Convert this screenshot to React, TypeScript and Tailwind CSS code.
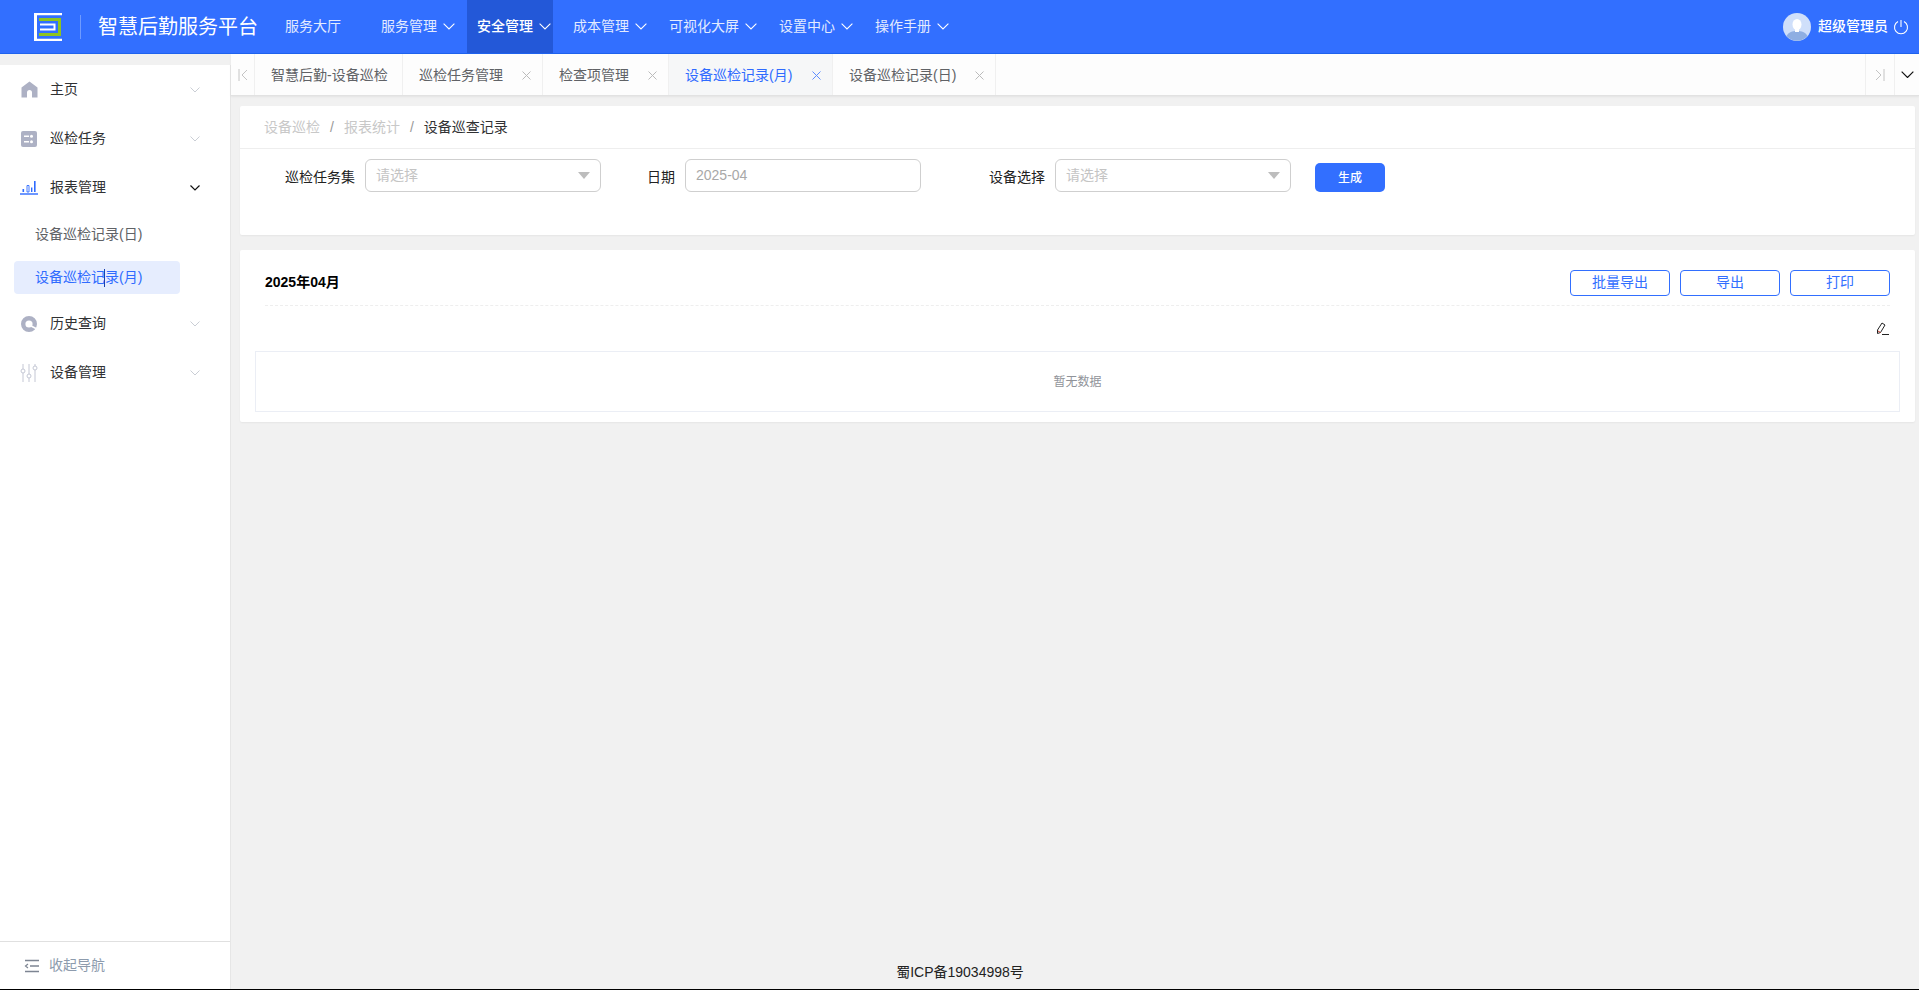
const navItems = [
  { label: '服务管理', active: false },
  { label: '安全管理', active: true },
  { label: '成本管理', active: false },
  { label: '可视化大屏', active: false },
  { label: '设置中心', active: false },
  { label: '操作手册', active: false },
];

const tabs = [
  { label: '智慧后勤-设备巡检', width: 'w-[148px]', closable: false, active: false },
  { label: '巡检任务管理', width: 'w-[140px]', closable: true, active: false },
  { label: '检查项管理', width: 'w-[126px]', closable: true, active: false },
  { label: '设备巡检记录(月)', width: 'w-[164px]', closable: true, active: true },
  { label: '设备巡检记录(日)', width: 'w-[163px]', closable: true, active: false },
];

function Chevron({ width, color, weight }: { width: number; color: string; weight: number }) {
  return (
    <svg width={width} height={width * 0.6} viewBox="0 0 10 6" fill="none" stroke={color} strokeWidth={weight}>
      <path d="M0.5 0.5 5 5 9.500 0.500" />
    </svg>
  );
}

function CloseMark({ color }: { color: string }) {
  return (
    <svg width="9" height="9" viewBox="0 0 9 9" fill="none" stroke={color} strokeWidth="1">
      <path d="M0.500 0.500 8.500 8.500M8.500 0.500 0.500 8.500" />
    </svg>
  );
}

function Logo() {
  return (
    <svg width="28" height="28" viewBox="0 0 28 28" fill="none">
      <path d="M28 1H1.5V27H28" stroke="#fff" strokeWidth="2.4" />
      <path d="M1.5 0V28" stroke="#fff" strokeWidth="3" />
      <path d="M5 6.5H25.5V21.5H5" stroke="#8fc31f" strokeWidth="3" />
      <path d="M6 11.5H20.5V16.5H6" stroke="#fff" strokeWidth="2" />
    </svg>
  );
}

function HomeIcon() {
  return (
    <svg width="17" height="17" viewBox="0 0 17 17">
      <path d="M8.5 0.5 16.5 6.5V16.5H11V11.5a2.5 2.5 0 0 0-5 0V16.5H0.5V6.5Z" fill="#adb1c4" />
    </svg>
  );
}

function TaskIcon() {
  return (
    <svg width="16" height="16" viewBox="0 0 16 16">
      <rect width="16" height="16" rx="2" fill="#adb1c4" />
      <path d="M3 5.2H8M3 10.8H8" stroke="#fff" strokeWidth="1.4" />
      <circle cx="10.5" cy="5.2" r="1.5" fill="#fff" />
      <circle cx="10.5" cy="10.8" r="1.5" fill="#fff" />
    </svg>
  );
}

function ChartIcon() {
  return (
    <svg width="18" height="15" viewBox="0 0 18 15" fill="none">
      <path d="M0 14H18" stroke="#2f6bff" strokeWidth="1.4" />
      <rect x="2.5" y="9" width="1.6" height="3" fill="#2f6bff" />
      <path d="M7 5.5H9V12H7Z" stroke="#2f6bff" strokeWidth="0.9" />
      <rect x="11" y="7.5" width="1.4" height="4.5" fill="#2f6bff" />
      <rect x="14" y="1" width="1.6" height="11" fill="#2f6bff" />
    </svg>
  );
}

function HistoryIcon() {
  return (
    <svg width="16" height="16" viewBox="0 0 16 16" fill="none">
      <circle cx="8" cy="8" r="5.800" stroke="#adb1c4" strokeWidth="4.400" />
      <path d="M10 10 15 12.5" stroke="#fff" strokeWidth="1.6" />
    </svg>
  );
}

function DeviceIcon() {
  return (
    <svg width="18" height="18" viewBox="0 0 18 18" fill="none" stroke="#c4c7d4" strokeWidth="1">
      <path d="M3 0V5M3 9V18M9 0V10M9 14V18M15 0V2M15 6V18" />
      <circle cx="3" cy="7" r="2" />
      <circle cx="9" cy="12" r="2" />
      <circle cx="15" cy="4" r="2" />
    </svg>
  );
}

function CollapseIcon() {
  return (
    <svg width="16" height="14" viewBox="0 0 16 14" fill="none" stroke="#7d8592" strokeWidth="1.5">
      <path d="M1 1.5H15M6 7H15M1 12.5H15" />
      <path d="M4 5 1.5 7 4 9" strokeWidth="1.2" />
    </svg>
  );
}

function Avatar() {
  return (
    <svg width="28" height="28" viewBox="0 0 28 28">
      <circle cx="14" cy="14" r="14" fill="#cfdffa" />
      <path d="M3.5 23c2-4 6-5 10.500-5s8.500 1 10.500 5a14 14 0 0 1-21 0Z" fill="#8eaee2" />
      <ellipse cx="14" cy="11.500" rx="4.500" ry="5.500" fill="#fff" />
      <path d="M12 15h4v4h-4Z" fill="#fff" />
    </svg>
  );
}

function SideItem({ icon, label, open }: { icon: React.ReactNode; label: string; open?: boolean }) {
  return (
    <div className="flex h-[49px] items-center pl-[20px] pr-[30px] text-[14px] text-[#303133]">
      <div className="flex w-[18px] justify-center">{icon}</div>
      <span className="ml-[12px] flex-1">{label}</span>
      {open ? <Chevron width={10} color="#111" weight={1.2} /> : <Chevron width={10} color="#c4c8d0" weight={0.9} />}
    </div>
  );
}

function SelectBox() {
  return (
    <div className="flex h-[33px] w-[236px] items-center justify-between rounded-[6px] border border-[#cfcfcf] bg-white px-[10px] text-[14px] text-[#c4c4c4]">
      <span>请选择</span>
      <span className="h-0 w-0 border-x-[6px] border-t-[7px] border-x-transparent border-t-[#bdbdbd]" />
    </div>
  );
}

export default function App() {
  return (
    <div className="flex h-[990px] w-[1919px] flex-col overflow-hidden border-b border-black bg-[#f1f1f1] font-['Liberation_Sans','Noto_Sans_CJK_SC',sans-serif]">
      {/* Header */}
      <header className="flex h-[54px] shrink-0 items-center border-b border-[#1f63ee] bg-[#326fff] text-white">
        <div className="ml-[34px]">
          <Logo />
        </div>
        <div className="ml-[18px] h-[24px] w-px bg-[#6f9bff]" />
        <div className="ml-[17px] w-[160px] whitespace-nowrap text-[20px]">智慧后勤服务平台</div>
        <div className="ml-[27px] w-[86px] whitespace-nowrap text-[14px] text-[#e3ebff]">服务大厅</div>
        <nav className="flex h-[53px] gap-[10px]">
          {navItems.map((item) => (
            <div
              key={item.label}
              className={`flex items-center whitespace-nowrap pl-[10px] pr-[2px] text-[14px] ${
                item.active ? 'bg-[#2358d8] font-medium text-white' : 'text-[#e3ebff]'
              }`}
            >
              {item.label}
              <span className="ml-[6px]">
                <Chevron width={12} color="#fff" weight={0.9} />
              </span>
            </div>
          ))}
        </nav>
        <div className="ml-auto flex items-center pr-[10px]">
          <Avatar />
          <span className="ml-[7px] whitespace-nowrap text-[14px] font-medium">超级管理员</span>
          <svg width="16" height="16" viewBox="0 0 16 16" fill="none" stroke="#fff" strokeWidth="1.1" className="ml-[5px]">
            <path d="M5 2.500a6.500 6.500 0 1 0 6 0" />
            <path d="M8 1V8" />
          </svg>
        </div>
      </header>

      <div className="flex min-h-0 flex-1">
        {/* Sidebar */}
        <aside className="mt-[11px] flex w-[231px] shrink-0 flex-col border-r border-[#e6e6e6] bg-white">
          <div className="relative flex-1">
            <SideItem icon={<HomeIcon />} label="主页" />
            <SideItem icon={<TaskIcon />} label="巡检任务" />
            <SideItem icon={<ChartIcon />} label="报表管理" open />
            <div className="mb-[5px] flex h-[44px] items-center pl-[35px] text-[14px] text-[#606266]">设备巡检记录(日)</div>
            <div className="mx-[14px] flex h-[33px] w-[166px] items-center rounded-[4px] bg-[#e6edfe] pl-[21px] text-[14px] text-[#2f6bff]">
              设备巡检记录(月)
            </div>
            <div className="h-[5px]" />
            <SideItem icon={<HistoryIcon />} label="历史查询" />
            <SideItem icon={<DeviceIcon />} label="设备管理" />
            {/* mouse cursor caught in the screenshot */}
            <div className="absolute left-[104px] top-[204px] h-[18px] w-px bg-[#1a3fb0]" />
          </div>
          <div className="flex h-[48px] shrink-0 items-center border-t border-[#e0e0e0] pl-[24px] text-[14px] text-[#8d9bad]">
            <CollapseIcon />
            <span className="ml-[9px]">收起导航</span>
          </div>
        </aside>

        {/* Main */}
        <main className="flex min-w-0 flex-1 flex-col">
          <div className="flex h-[42px] shrink-0 items-stretch border-b border-[#e2e2e2] bg-[#fdfdfd] shadow-[0_1px_2px_rgba(0,0,0,0.06)]">
            <div className="flex w-[24px] items-center justify-center border-r border-[#f0f0f0]">
              <svg width="10" height="12" viewBox="0 0 10 12" fill="none" stroke="#c4c4c4" strokeWidth="1">
                <path d="M1 0V12M9 1 4 6 9 11" />
              </svg>
            </div>
            {tabs.map((tab) => (
              <div
                key={tab.label}
                className={`flex ${tab.width} items-center justify-between border-r border-[#f0f0f0] pl-[16px] pr-[11px] pt-[2px] text-[14px] ${
                  tab.active ? 'bg-[#f6f7f8] text-[#2f6bff]' : 'text-[#606266]'
                }`}
              >
                <span className="whitespace-nowrap">{tab.label}</span>
                {tab.closable && <CloseMark color={tab.active ? '#5f8dff' : '#bbbbbb'} />}
              </div>
            ))}
            <div className="ml-auto flex w-[30px] items-center justify-center border-x border-[#f0f0f0]">
              <svg width="10" height="12" viewBox="0 0 10 12" fill="none" stroke="#c4c4c4" strokeWidth="1">
                <path d="M9 0V12M1 1 6 6 1 11" />
              </svg>
            </div>
            <div className="flex w-[24px] items-center justify-center">
              <Chevron width={13} color="#111" weight={0.9} />
            </div>
          </div>

          <div className="flex flex-1 flex-col pl-[9px] pr-[4px] pt-[10px]">
            {/* Filter card */}
            <section className="h-[129px] rounded-[2px] bg-white shadow-[0_1px_2px_rgba(0,0,0,0.05)]">
              <div className="flex h-[43px] items-center border-b border-[#eeeeee] pl-[24px] text-[14px] text-[#c8c8c8]">
                <span>设备巡检</span>
                <span className="mx-[10px] text-[#999]">/</span>
                <span>报表统计</span>
                <span className="mx-[10px] text-[#999]">/</span>
                <span className="text-[#303133]">设备巡查记录</span>
              </div>
              <div className="mt-[10px] flex items-start text-[14px] text-[#222]">
                <span className="ml-[45px] mt-[8px] w-[70px] whitespace-nowrap">巡检任务集</span>
                <div className="ml-[10px]">
                  <SelectBox />
                </div>
                <span className="ml-[46px] mt-[8px] whitespace-nowrap">日期</span>
                <div className="ml-[10px] flex h-[33px] w-[236px] items-center rounded-[6px] border border-[#cfcfcf] pl-[10px] text-[#a8a8a8]">
                  2025-04
                </div>
                <span className="ml-[68px] mt-[8px] whitespace-nowrap">设备选择</span>
                <div className="ml-[10px]">
                  <SelectBox />
                </div>
                <button className="ml-[24px] mt-[4px] h-[29px] w-[70px] rounded-[5px] bg-[#326fff] text-[12px] font-medium text-white">
                  生成
                </button>
              </div>
            </section>

            {/* Result card */}
            <section className="mt-[15px] h-[172px] rounded-[2px] bg-white px-[15px] shadow-[0_1px_2px_rgba(0,0,0,0.05)]">
              <div className="mx-[10px] flex h-[56px] items-center justify-between border-b border-dashed border-[#eeeeee] pt-[10px]">
                <span className="text-[14px] font-bold text-black">2025年04月</span>
                <div className="flex gap-[10px]">
                  {['批量导出', '导出', '打印'].map((label) => (
                    <button
                      key={label}
                      className="h-[26px] w-[100px] rounded-[4px] border border-[#326fff] text-[14px] text-[#326fff]"
                    >
                      {label}
                    </button>
                  ))}
                </div>
              </div>
              <div className="flex h-[45px] items-center justify-end pr-[11px]">
                <svg width="13" height="13" viewBox="0 0 13 13" fill="none" stroke="#222" strokeWidth="1">
                  <path d="M1.500 8 6 1 9 3 4.500 10.500 1.500 11.500Z" />
                  <path d="M6 12.500H13" />
                  <path d="M2 9 4.500 10.500" stroke="#c0392b" />
                </svg>
              </div>
              <div className="flex h-[61px] items-center justify-center border border-[#ebeef5] text-[12px] text-[#909399]">
                暂无数据
              </div>
            </section>

            <div className="mb-[6px] mr-[235px] mt-auto text-center text-[14px] text-[#222]">蜀ICP备19034998号</div>
          </div>
        </main>
      </div>
    </div>
  );
}
